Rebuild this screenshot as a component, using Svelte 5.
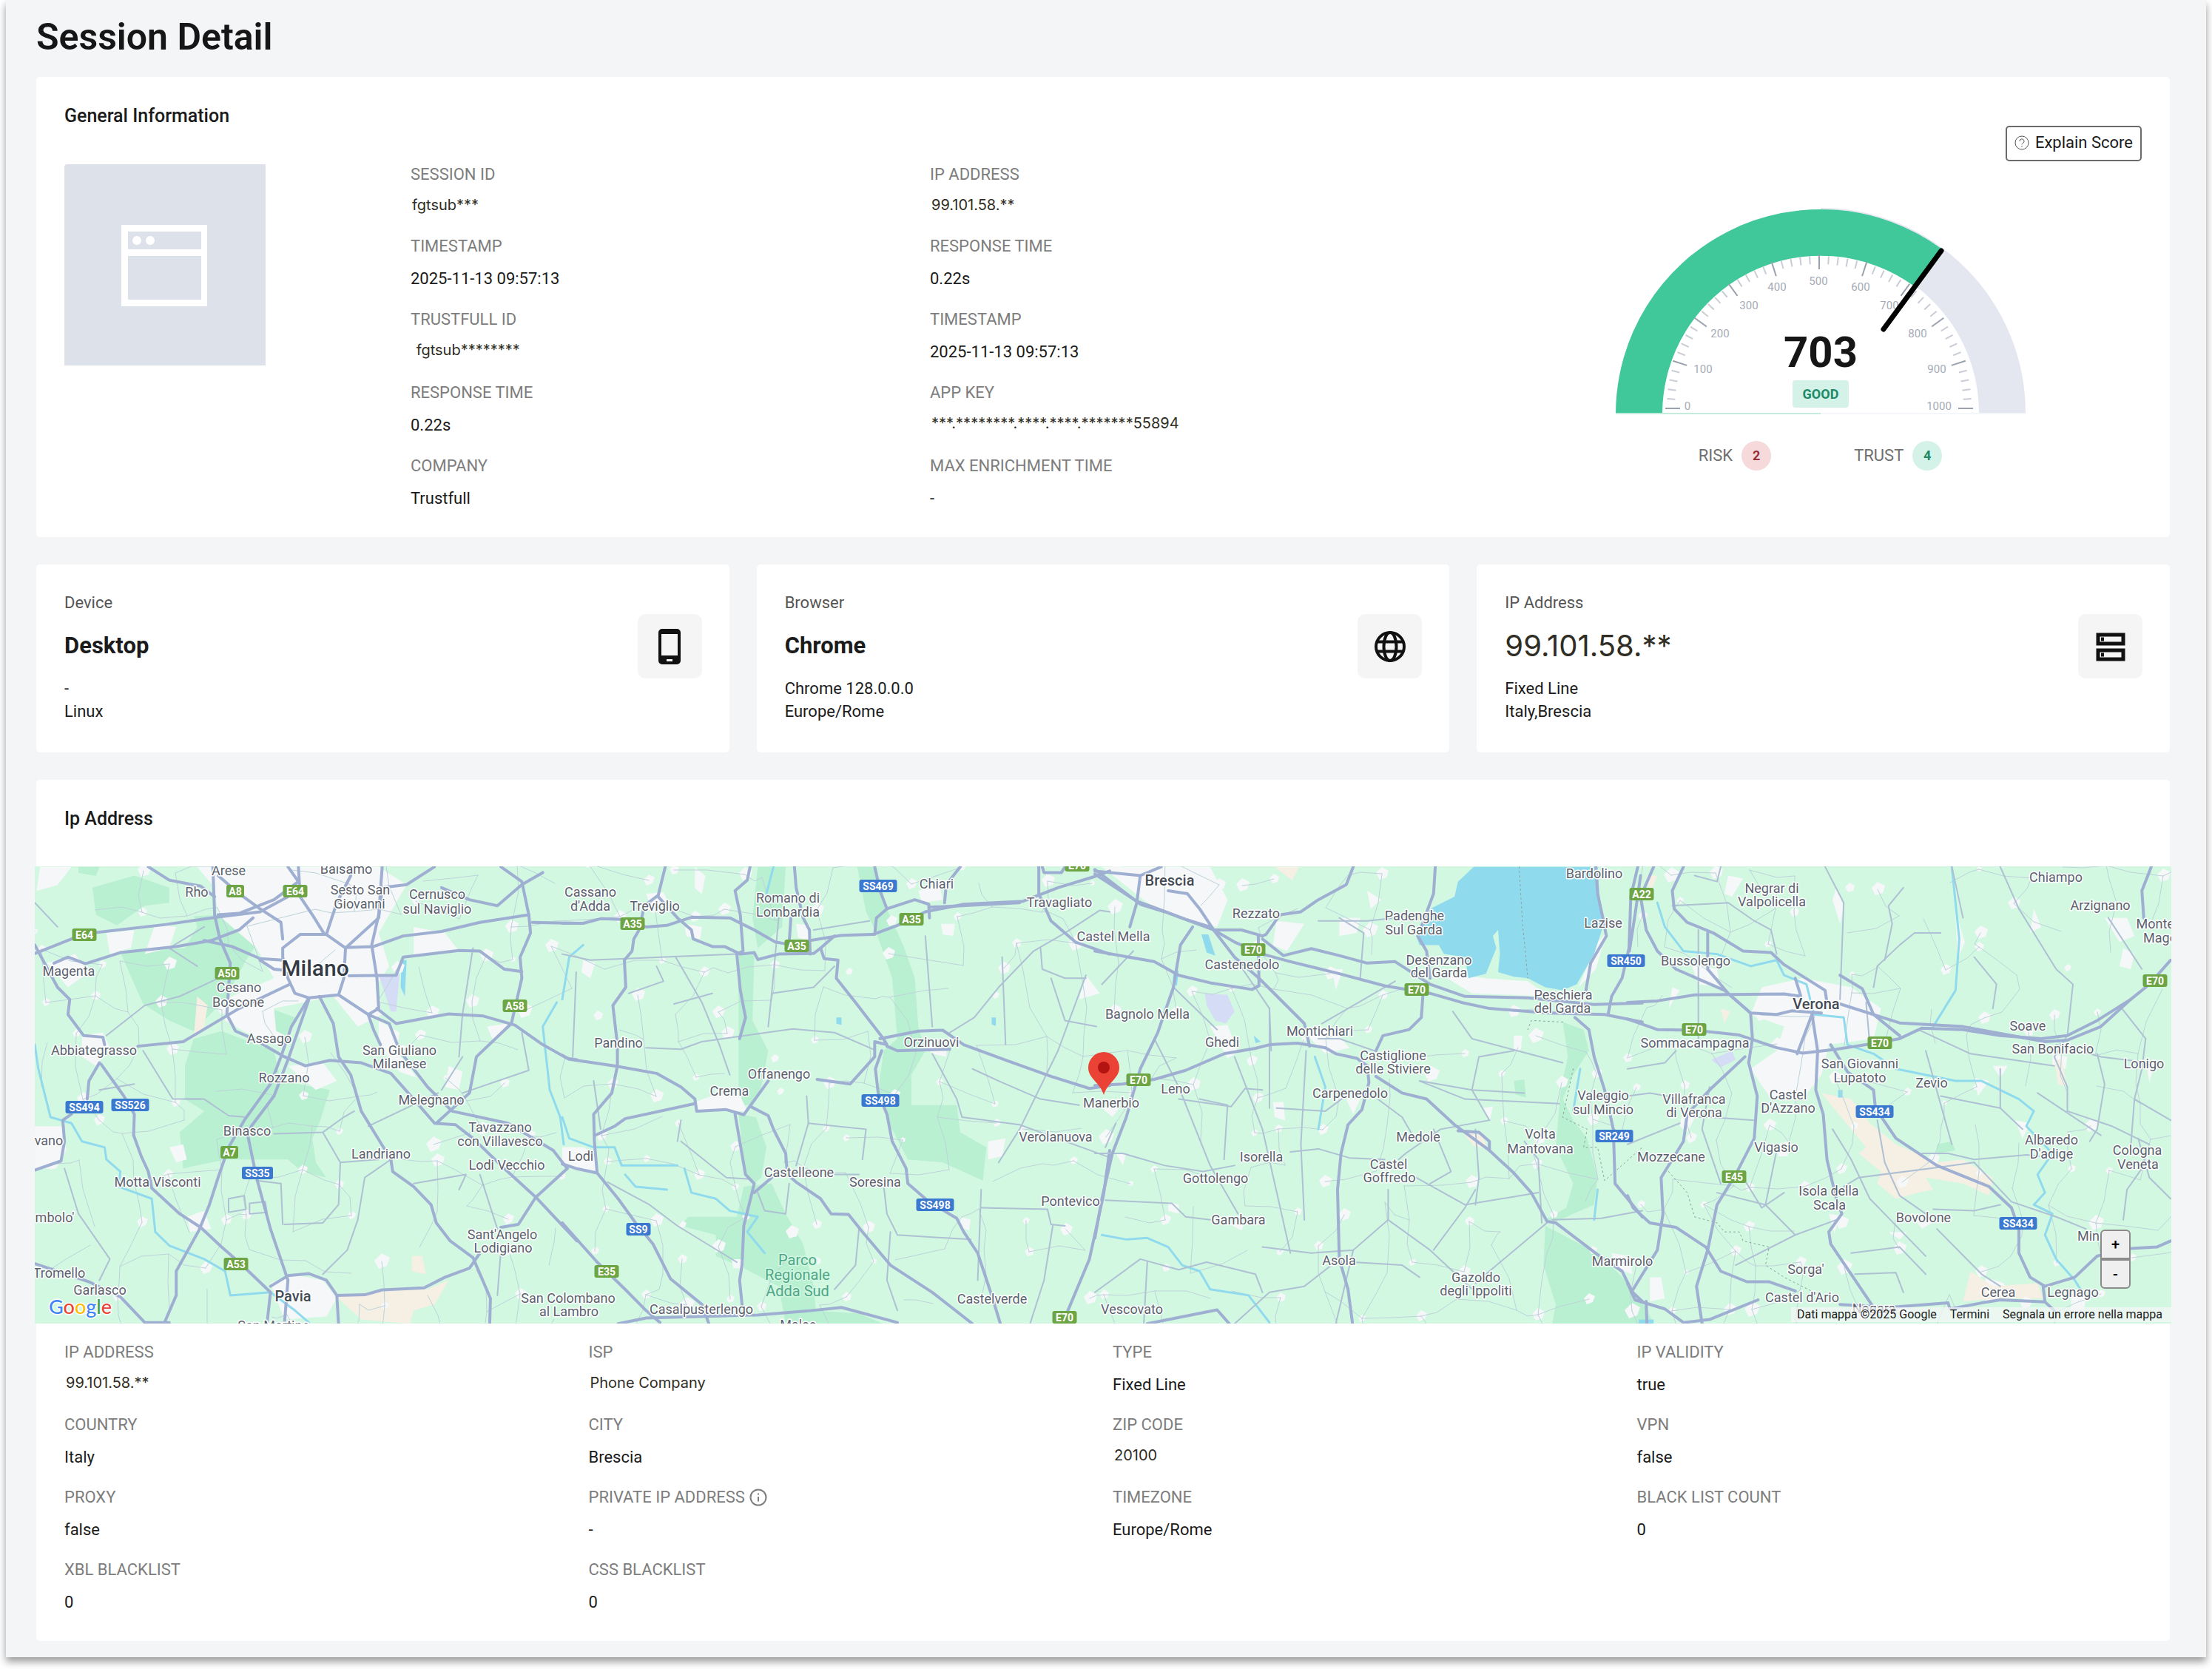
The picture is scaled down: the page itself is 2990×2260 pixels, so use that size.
<script>
  const session = [
    ['SESSION ID', 'fgtsub***', true],
    ['IP ADDRESS', '99.101.58.**', true],
    ['TIMESTAMP', '2025-11-13 09:57:13'],
    ['RESPONSE TIME', '0.22s'],
    ['TRUSTFULL ID', '\u00a0fgtsub********', true],
    ['TIMESTAMP', '2025-11-13 09:57:13'],
    ['RESPONSE TIME', '0.22s'],
    ['APP KEY', '***.********.****.****.*******55894', true],
    ['COMPANY', 'Trustfull'],
    ['MAX ENRICHMENT TIME', '-']
  ];

  const network = [
    ['IP ADDRESS', '99.101.58.**', true],
    ['ISP', 'Phone Company', true],
    ['TYPE', 'Fixed Line'],
    ['IP VALIDITY', 'true'],
    ['COUNTRY', 'Italy'],
    ['CITY', 'Brescia'],
    ['ZIP CODE', '20100', true],
    ['VPN', 'false'],
    ['PROXY', 'false'],
    ['PRIVATE IP ADDRESS', '-', false, true],
    ['TIMEZONE', 'Europe/Rome'],
    ['BLACK LIST COUNT', '0'],
    ['XBL BLACKLIST', '0'],
    ['CSS BLACKLIST', '0']
  ];

  const cards = [
    { label: 'Device', value: 'Desktop', lines: ['-', 'Linux'], icon: 'phone' },
    { label: 'Browser', value: 'Chrome', lines: ['Chrome 128.0.0.0', 'Europe/Rome'], icon: 'globe' },
    { label: 'IP Address', value: '99.101.58.**', lines: ['Fixed Line', 'Italy,Brescia'], icon: 'server', masked: true }
  ];

  // Gauge scale: 0 sits on the left, 1000 on the right, one tick each 20 points.
  const ticks = Array.from({ length: 51 }, (_, i) => {
    const a = Math.PI - (i / 50) * Math.PI;
    const major = i % 5 === 0;
    const outer = major ? 208 : 206;
    const inner = major ? 188 : 195;
    const c = Math.cos(a);
    const s = Math.sin(a);
    return { major, x1: 277 + outer * c, y1: 272 - outer * s, x2: 277 + inner * c, y2: 272 - inner * s };
  });
  const marks = [
    [0, 99, 274], [100, 120, 224], [200, 143, 176], [300, 182, 138], [400, 220, 113], [500, 276, 105],
    [600, 333, 113], [700, 372, 138], [800, 410, 176], [900, 436, 224], [1000, 439, 274]
  ];

  // The map is drawn as four neighbouring tiles, each with its own grid.
  const tiles = [
    {
      ox: 40, kx: 0.4719,
      urban: [
        'M480 31L1000 31 1080 90 1000 250 1030 360 990 430 1010 520 940 560 870 460 700 500 710 620 620 580 560 540 560 470 700 400 650 300 540 190 530 100Z',
        'M150 590l60 -10 20 50 -40 60 -40 -30Z', 'M15 890l80 0 10 80 -30 60 -60 0Z', 'M690 1410l60 -30 90 20 40 60 -30 60 -120 10Z',
        'M740 690l100 -10 40 60 -60 30Z', 'M50 350l80 -30 40 60 -60 50Z', 'M360 220l60 10 -20 70 -70 20Z', 'M220 250l80 -10 -10 60 -60 20Z',
        'M1000 540l60 40 -10 60 60 90 -50 -20 -60 -90Z', 'M1100 230l90 20 40 60 -130 20Z', 'M1200 690l40 20 -10 60 -40 -10Z', 'M30 31l90 0 -40 60 -60 20Z',
        'M450 1190l50 -20 20 60 -60 10Z', 'M400 960l40 -10 10 50 -30 10Z', 'M1310 560l60 -10 -40 60Z'
      ],
      park: [
        'M260 315L445 300 480 230 470 195 540 190 600 250 650 290 620 340 560 470 470 575 400 540 325 485Z',
        'M470 600L550 575 700 640 720 740 860 770 830 880 810 930 820 1010 850 1060 780 1040 740 1000 560 1000 440 1030 430 910 500 840 445 800 445 690Z',
        'M180 100L300 60 400 100 400 150 330 160 250 225 190 190Z', 'M690 500L760 530 720 620 690 590Z', 'M140 31l60 0 -10 30 -50 -10Z'
      ],
      beige: ['M880 1455L1000 1435 1140 1430 1200 1400 1160 1480 1100 1500 1090 1544 950 1530Z', 'M480 460l30 30 -10 70 -30 40Z', 'M1095 1320l30 0 10 60 -40 -10Z'],
      lilac: ['M1000 390L1060 385 1050 510 1035 510Z'],
      water: ['M1065 340l15 0 -5 120 -12 -30Z'],
      river: ['M15 620L25 700 60 860 120 880 150 940 215 960 220 1000 260 1040 255 1090 350 1130 360 1240 400 1285 500 1330 560 1370 575 1450 690 1440 760 1500 800 1540', 'M1510 480L1470 560 1490 770 1520 860 1530 950'],
      roads: [
        'M15 318L120 270 180 250 390 222 540 197 660 180 740 130', 'M340 31L400 75 490 95 530 130',
        'M525 31L530 190 545 270 575 350 565 520 590 575 640 600 730 660 790 690 860 672 950 680 1035 715 1100 800 1160 880 1220 885 1270 930 1360 1030 1450 1125 1568 1270',
        'M540 60L600 120 660 170 720 215 725 270', 'M770 31L775 130 810 190 845 255', 'M740 31L770 80 700 140 600 185 540 190',
        'M1010 31L1000 190 980 290 995 400 1000 500 970 520 985 570 1005 620',
        'M725 300L775 255 850 255 905 300 900 400 885 455 800 465 760 450 740 400 725 330Z',
        'M905 300L1000 200 1010 100 1080 90 1160 31', 'M905 298L985 295 1070 260 1180 245 1290 215 1430 190',
        'M915 392L1050 390 1070 330 1230 308 1290 310 1360 370 1410 378',
        'M1350 31L1410 80 1430 190 1435 250 1405 330 1410 400 1380 550 1280 660 1260 780 1165 880', 'M1440 215L1568 218',
        'M1470 50L1410 90 1340 160 1260 140 1180 100', 'M995 500L1050 550 1200 518 1300 525 1390 555 1470 620 1540 665 1568 670',
        'M885 455L970 520 1030 550 1060 640 1140 760 1210 840 1370 880 1500 970 1540 1030',
        'M800 465L750 560 720 660 690 750 615 870 570 960 540 1060 515 1150 485 1235 420 1370 420 1450 385 1544',
        'M800 470L740 670 700 790 635 890 625 920 650 1060 690 1230 740 1400 730 1544',
        'M830 460L870 550 885 660 920 720 950 840 1035 1000 1040 1040 1100 1090 1150 1150 1165 1210 1205 1270 1270 1325 1320 1460 1318 1544',
        'M745 420L600 500 440 610 310 625', 'M15 290L80 430 115 470 110 520 155 590 210 595 215 620',
        'M70 350L110 330 160 352 260 315 420 295 520 275 600 240 640 200', 'M500 275L580 295 660 335 725 340', 'M660 340L700 370 740 375',
        'M200 680L170 740 165 800', 'M205 685L270 790 300 850 298 920 320 990 340 1040 350 1095 430 1180 490 1225 550 1290 600 1340 690 1440 680 1544',
        'M15 1035L90 1005 100 940 95 870 120 850', 'M15 1345L80 1370 170 1405 260 1455 330 1540 400 1540',
        'M690 1420L740 1385 800 1378 850 1400 880 1450 885 1544', 'M880 1450L960 1448 1010 1432 1130 1425 1190 1390 1260 1360 1290 1310',
        'M1540 1030L1450 1125 1400 1215 1350 1225', 'M850 255L880 150 920 60'
      ],
      lanes: [
        'M540 400L430 460 330 490 220 590', 'M325 640L410 800 500 800 570 855 620 860', 'M445 800L490 800', 'M700 915L840 910 900 860 930 840',
        'M840 910L890 1010 885 1150 840 1210 730 1215', 'M650 1070L720 1080 725 1215', 'M1035 1000L960 1060 940 1200 910 1300 840 1380',
        'M1240 660L1180 770', 'M1240 780L1430 705 1410 580', 'M970 890L1170 780', 'M15 150L80 230', 'M200 770L300 750', 'M570 1130l45 -10 5 45 -50 10Z', 'M630 1145l45 -5 5 35 -50 5Z',
        'M1230 1100L1250 1050 1100 1080', 'M1290 1050L1340 1230', 'M100 1030L140 1180 230 1330 200 1400', 'M500 230L400 300 480 360', 'M1270 300L1240 520 1230 660', 'M1350 1300L1340 1450', 'M890 1010L1000 1000'
      ],
      labels: [
        ['Arese', 569, 58], ['Balsamo', 907, 54], ['Rho', 478, 131], ['Sesto San', 948, 123], ['Giovanni', 946, 170], ['Cernusco', 1168, 138],
        ['sul Naviglio', 1168, 185], ['Magenta', 112, 392], ['Milano', 817, 392, 'city'], ['Cesano', 600, 447], ['Boscone', 598, 494],
        ['Assago', 686, 615], ['Abbiategrasso', 185, 653], ['San Giuliano', 1060, 653], ['Milanese', 1060, 699], ['Rozzano', 728, 744],
        ['Melegnano', 1150, 819], ['Tavazzano', 1347, 908], ['con Villavesco', 1348, 955], ['vano', 56, 954], ['Binasco', 622, 921],
        ['Landriano', 1007, 997], ['Lodi Vecchio', 1367, 1034], ['Motta Visconti', 366, 1090], ["mbolo'", 72, 1207], ["Sant'Angelo", 1354, 1264],
        ['Lodigiano', 1357, 1309], ['Tromello', 85, 1391], ['Garlasco', 202, 1447], ['Pavia', 754, 1470, 'large'], ['San Martino', 700, 1566]
      ],
      shields: [
        ['E64', 157, 254, 'g'], ['A8', 590, 111, 'g'], ['E64', 761, 111, 'g'], ['A50', 566, 381, 'g'], ['A58', 1390, 491, 'g'],
        ['SS494', 157, 825, 'b'], ['SS526', 288, 818, 'b'], ['A7', 573, 974, 'g'], ['SS35', 653, 1044, 'b'], ['A53', 592, 1346, 'g']
      ]
    },
    {
      ox: 760, kx: 0.4719,
      urban: ['M240 120l50 -5 20 50 -50 20Z', 'M380 810l70 -30 60 10 20 50 -140 0Z', 'M0 960l60 0 40 20 -5 60 -95 -25Z', 'M350 220l50 10 -5 40 -40 -10Z', 'M670 220l40 5 -5 50 -30 -10Z', 'M1020 110l60 -20 10 50 -60 10Z', 'M1220 940l50 -10 -10 60 -40 10Z', 'M1040 620l60 5 0 35 -40 -10Z', 'M1085 220l40 0 -5 40 -30 -5Z', 'M1140 1190l30 10 -5 35 -25 -10Z', 'M485 1330l35 0 0 30 -30 0Z', 'M380 31l30 30 -10 60 -20 -20Z', 'M60 340l35 10 -15 50 -25 -20Z', 'M1500 390l40 60 -60 20Z'],
      park: [
        'M560 31L640 31 630 230 560 300 545 200Z', 'M505 320L550 320 545 540 590 640 570 760 540 820 505 820 505 600Z', 'M505 850L555 860 585 960 570 1060 550 1080 525 1050Z',
        'M520 1090L600 1080 640 1180 690 1280 720 1420 730 1544 640 1544 620 1420 520 1360 440 1320 440 1250 340 1220 360 1190 500 1190Z',
        'M845 31L900 31 930 170 980 300 1010 400 1020 560 1040 640 1000 720 1000 820 1130 820 1140 910 1215 960 1205 1070 1090 1010 990 1000 945 900 905 780 920 640 960 600 945 400 900 250 870 180Z', 'M720 1500l130 10 70 34 -190 0Z'
      ],
      beige: [],
      lilac: [],
      water: ['M785 530l15 0 0 25 -15 -5Z', 'M1230 530l12 0 0 28 -12 -5Z'],
      river: ['M0 860L20 930 90 960 150 960 170 1020 330 1020', 'M350 1030L370 1110 440 1130 480 1170 560 1190 530 1240 580 1310', 'M605 31L585 120', 'M60 290L20 330 0 470', 'M180 1050L210 1090 300 1100'],
      roads: [
        'M0 218L60 218 110 203 170 205 240 230 300 225 370 198 480 200 550 240 610 280 660 290 710 275 800 258 890 255 960 225 1040 180 1150 155 1320 145 1420 100 1520 65 1568 45',
        'M1050 165L1310 150', 'M295 31L275 125 235 160 220 240 205 270 200 310 178 340 182 430 145 490 158 620 158 690 142 780 90 850 92 940 100 1045',
        'M275 130L330 200 370 240 375 270 430 295 465 295 510 320 550 315 560 338 620 320 720 318 740 300 780 260',
        'M538 31L530 75 495 110 510 190 518 310 500 320 510 440 525 530 508 600', 'M665 31L670 100 690 200 708 240 710 320', 'M655 200L650 280',
        'M740 300L750 335 790 340 785 400 840 480 920 600 930 620 895 610 895 660 825 750 730 735',
        'M895 31L910 110 930 170 900 200 895 255', 'M930 170L1010 140 1050 155 1052 200', 'M1140 31L1100 90 1095 150',
        'M1365 31L1365 120 1400 210 1470 280 1568 320', 'M910 600L1020 575 1090 572 1150 620 1280 675 1400 725 1510 765 1568 755', 'M930 625L960 640 1110 635',
        'M915 640L897 700 905 780 930 850 945 940 985 1030 990 1080 1050 1140 1130 1195 1150 1240 1190 1310 1230 1450 1255 1544',
        'M0 655L20 668 150 690 270 715 340 760 380 800 385 840 470 835 520 852 540 820 590 740', 'M380 815L180 865 150 890 95 920',
        'M0 1015L40 1030 100 1045 160 1130 210 1210 260 1280 310 1395 400 1480 420 1544', 'M495 850L525 1050 550 1080 520 1220 515 1350 508 1400 515 1480',
        'M540 825L590 855 605 900 640 980 645 1050 670 1075 740 1130 770 1180 820 1182 860 1240 940 1350 1060 1440 1175 1544', 'M550 1110L600 1060',
        'M0 1210L100 1340 180 1430 240 1500 280 1540', 'M160 1544L240 1525 560 1515 700 1502 800 1490 960 1540', 'M1568 970L1550 1120 1510 1330 1445 1510',
        'M1375 31L1380 50 1430 50 1440 31'
      ],
      lanes: [
        'M0 320L80 340 500 320', 'M240 630L340 635 400 610 660 568 780 580 890 635', 'M325 330L400 480 450 620 480 720', 'M320 485L430 450', 'M190 450L290 410 270 360',
        'M1568 180L1540 175 1440 250 1350 310 1250 430 1180 530 1110 580', 'M1500 390L1420 640 1310 900 1250 1010', 'M1060 650L1130 800 1145 860 1310 885 1560 990', 'M1175 700L1250 740 1370 800 1480 820',
        'M700 790L705 880 670 1020', 'M705 880L870 900 860 1000', 'M340 940L470 1060 540 1065', 'M130 1075L250 1150 330 1220 500 1340', 'M850 1050L780 1050', 'M1200 1160L1390 1165 1400 1215 1440 1220',
        'M920 1080L930 1180 960 1250 1170 1265', 'M850 1230L840 1350 780 1430', 'M620 200L600 450 590 560', 'M720 240L880 210', 'M940 1240L930 1400 960 1500', 'M1370 300L1375 370 1440 400 1500 400', 'M1400 400L1440 540 1530 560', 'M1260 330L1270 620', 'M1040 260L1060 560', 'M650 1080L640 1180 580 1170 560 1110', 'M90 740L110 900', 'M1405 1220L1380 1400 1340 1544', 'M600 450L720 430 780 360', 'M30 660L40 380', 'M340 870L330 940', 'M1200 1100L1190 1400'
      ],
      labels: [
        ['Cassano', 80, 130], ["d'Adda", 80, 176], ['Treviglio', 264, 176], ['Romano di', 646, 149], ['Lombardia', 646, 195], ['Chiari', 1073, 104],
        ['Travagliato', 1423, 164], ['Pandino', 162, 630], ['Orzinuovi', 1058, 626], ['Offanengo', 621, 732], ['Crema', 479, 789], ['Lodi', 53, 1004],
        ['Castelleone', 678, 1059], ['Soresina', 896, 1091], ['Verolanuova', 1413, 940], ['Pontevico', 1455, 1154], ['San Colombano', 17, 1474],
        ['al Lambro', 19, 1518], ['Casalpusterlengo', 398, 1512], ['Parco', 673, 1350, 'nature'], ['Regionale', 673, 1400, 'nature'],
        ['Adda Sud', 673, 1452, 'nature'], ['Maleo', 675, 1562], ['Castelverde', 1231, 1478]
      ],
      shields: [
        ['SS469', 905, 92, 'b'], ['A35', 202, 217, 'g'], ['A35', 671, 291, 'g'], ['A35', 1001, 204, 'g'], ['SS498', 911, 804, 'b'],
        ['SS498', 1067, 1150, 'b'], ['SS9', 218, 1230, 'b'], ['E35', 127, 1370, 'g'], ['E70', 1438, 1521, 'g'], ['E70', 1475, 24, 'g']
      ]
    },
    {
      ox: 1480, kx: 0.4719,
      urban: ['M20 31L330 31 380 140 350 230 270 210 150 150Z', 'M520 210l80 10 -50 90 -40 -20Z', 'M700 200l60 0 -10 50 -50 10Z', 'M330 560l50 -5 30 90 -30 20Z', 'M600 580l80 -10 50 60 -70 20Z', 'M510 810l30 0 5 60 -30 -10Z', 'M980 380l140 20 120 10 60 50 -220 -10Z', 'M1440 280l25 -30 -30 120 -50 60Z', 'M720 800l40 0 -20 50Z', 'M20 830l50 0 -20 30Z', 'M1480 1310l50 10 10 60 -50 -20Z', 'M210 1140l30 10 0 30 -30 -10Z', 'M1200 590l25 0 -5 40 -20 5Z', 'M780 110l40 30 -30 30Z', 'M680 370l30 0 -20 70Z', 'M1110 830l30 -5 -10 50Z', 'M380 1210l50 -5 -10 30Z', 'M60 980l30 0 -10 40Z'],
      park: [
        'M1340 545L1400 570 1415 640 1370 720 1340 800 1370 870 1410 930 1440 1060 1430 1150 1310 1210 1290 1200 1350 1160 1370 1080 1320 960 1335 760 1355 660Z',
        'M1290 1220L1440 1310 1520 1400 1568 1470 1568 1544 1310 1544 1320 1480 1285 1350Z', 'M1200 740l30 -5 5 60 -30 -10Z'
      ],
      beige: ['M515 31l70 0 -20 45Z', 'M1050 905l60 15 15 45 -40 -10Z'],
      lilac: ['M315 450L380 455 400 510 375 550 345 540 320 490Z'],
      water: ['M1085 31L1440 31 1445 120 1455 230 1430 320 1380 420 1340 440 1290 430 1240 400 1200 395 1155 380 1160 320 1155 240 1140 260 1150 300 1120 385 1070 400 1060 330 1000 320 985 290 930 290 920 260 960 170 1030 130 1040 80Z', 'M455 590l20 20 -15 5Z', 'M305 255l20 0 20 70 -25 -10Z', 'M225 375l15 0 -5 50 -12 -10Z'],
      river: ['M20 1250L90 1265 150 1260 210 1290 250 1350 300 1370 330 1430 440 1450 500 1540', 'M630 660L660 760 640 900', 'M1390 700L1370 840', 'M1440 1100L1430 1200'],
      roads: [
        'M0 40L130 155 200 180 340 240 400 280 480 320 560 345 700 385 830 425 960 450 1050 480 1130 500 1300 515 1460 520 1568 545',
        'M0 55L120 145 180 170 260 205 330 230', 'M190 31L130 60 120 150 100 230', 'M0 45L130 60',
        'M210 110L265 120 300 170 340 240 420 240 480 260 490 255 530 190 590 180 640 140 720 90 740 31', 'M340 240L400 330 470 400 600 550 615 625',
        'M280 230L245 290 225 430 180 580 130 700 90 860 50 980 20 1130 0 1260', 'M0 310L170 345 240 390 330 415 450 437 470 425 468 260',
        'M0 755L80 750 170 735 260 705 370 650 460 632 500 620 580 615 660 630 690 650 750 665 780 690 785 745 765 835 725 885 705 980 695 1100 700 1330 725 1430 738 1544',
        'M805 640L825 590 900 570 935 530 940 450', 'M975 31L970 120 925 260 950 310 960 400',
        'M480 270L540 325 620 302 700 325 780 350 860 345 960 420 1060 460 1240 465 1430 487 1568 482',
        'M805 725L880 780 950 800 1030 885 1130 970 1200 1045 1250 1110 1295 1205 1320 1210 1440 1315 1510 1370 1540 1440 1568 1470',
        'M1040 905L1100 910 1130 940 1130 970', 'M1435 31L1440 120 1455 200 1465 260 1420 350 1405 450', 'M1555 31L1535 130 1530 300 1510 400 1480 460 1470 520',
        'M1375 530L1415 570 1430 660 1460 770 1485 900 1490 1080 1540 1150 1568 1190', 'M150 1544L350 1498 385 1544'
      ],
      lanes: [
        'M225 430L350 570', 'M400 330L500 500 505 640', 'M860 410L650 550', 'M170 600L240 760 330 1020 410 1180', 'M240 800L390 825 430 765 480 770', 'M400 660L480 900 560 1310', 'M520 830L660 840 730 780',
        'M0 980L80 980 200 1020 310 1040 400 1020', 'M30 1135L220 1145 260 1190 330 1200', 'M560 975L640 965 730 995 830 1000', 'M605 640L590 950 600 1200', 'M480 1290L620 1310 740 1300 840 1200 960 1300 1090 1440',
        'M920 1060L1060 1150 1270 1110', 'M840 1100L840 1200', 'M740 1340L880 1350 930 1390', 'M930 740L1060 800 1330 815', 'M930 740L1080 770 1230 780', 'M1130 870L990 900 890 980 870 1000', 'M1300 1205L1130 1370 1090 1410',
        'M1310 1200L1450 1195 1568 1170', 'M700 1330L600 1420 500 1440 400 1544', 'M0 1440L130 1330 240 1365 320 1340 460 1380 480 1440', 'M20 420L110 310', 'M640 210L780 210 860 200', 'M700 200L770 250 760 400', 'M1200 640L1100 660 1080 770 1130 870', 'M1025 510L1080 600 1210 640 1340 680', 'M300 800L380 820 370 1000', 'M500 500L500 830', 'M970 900L1020 1040 960 1080', 'M1090 1100L1060 1160 970 1300', 'M1280 1210L1270 1000 1230 940', 'M740 1300L690 1544', 'M1090 900L1100 1060 1090 1150', 'M810 800L880 860 910 920', 'M60 880L30 960', 'M150 1340L140 1544', 'M800 640L700 600 640 600'
      ],
      dotted: ['M1215 31L1225 220 1240 400', 'M1340 545L1250 540 1240 570', 'M1370 700L1340 860 1410 900 1400 960 1440 960 1460 1070 1568 960'],
      labels: [
        ['Brescia', 213, 92, 'large'], ['Rezzato', 461, 202], ['Castel Mella', 53, 276], ['Castenedolo', 421, 369], ['Bagnolo Mella', 151, 535],
        ['Ghedi', 364, 626], ['Montichiari', 645, 591], ['Padenghe', 915, 209], ['Sul Garda', 914, 255], ['Desenzano', 985, 354], ['del Garda', 985, 398],
        ['Peschiera', 1341, 471], ['del Garda', 1339, 515], ['Bardolino', 1431, 69], ['Lazise', 1456, 232], ['Castiglione', 855, 671],
        ['delle Stiviere', 855, 716], ['Carpenedolo', 731, 796], ['Leno', 231, 782], ['Manerbio', 47, 827], ['Medole', 926, 940], ['Volta', 1276, 932],
        ['Mantovana', 1276, 979], ['Valeggio', 1455, 804], ['sul Mincio', 1455, 850], ['Isorella', 476, 1008], ['Castel', 842, 1031], ['Goffredo', 844, 1076],
        ['Gottolengo', 346, 1079], ['Gambara', 411, 1215], ['Asola', 700, 1351], ['Gazoldo', 1092, 1406], ['degli Ippoliti', 1092, 1451],
        ['Vescovato', 107, 1512], ['Marmirolo', 1511, 1353]
      ],
      shields: [['E70', 453, 304, 'g'], ['E70', 921, 436, 'g'], ['E70', 126, 734, 'g'], ['SR450', 1522, 341, 'b'], ['SR249', 1487, 920, 'b']]
    },
    {
      ox: 2200, kx: 0.5038,
      urban: ['M360 430L470 400 600 430 680 500 660 600 540 620 520 720 470 800 380 790 330 700 400 640 420 560 330 520Z', 'M170 350l70 20 10 60 -60 -10Z', 'M1280 200l60 0 20 60 -40 20Z', 'M1140 650l40 10 -5 40 -35 -10Z', 'M960 1390l50 20 10 60 -60 0Z', 'M1190 1440l40 20 -10 60 -30 -20Z', 'M60 1390l30 0 10 70 -40 10Z', 'M150 830l40 10 -30 70 -20 -20Z', 'M930 730l40 10 -30 50Z', 'M1040 870l40 10 -20 50Z', 'M760 1180l70 20 -40 30Z', 'M700 1240l50 0 -20 25Z', 'M980 690l40 0 -20 40Z', 'M560 100l20 60 -10 60 -20 -80Z', 'M880 180l25 100 -20 60Z', 'M1090 170l20 60 -30 20Z', 'M1330 300l30 20 -10 50 -30 -10Z', 'M400 950l30 -10 0 50 -25 0Z', 'M1390 670l25 5 -15 70Z', 'M540 1180l30 5 -15 60Z', 'M270 60l40 10 -30 60 -20 -10Z', 'M120 430l20 10 -30 60Z'],
      park: ['M830 950l40 -10 10 30 -50 10Z', 'M0 1450l40 20 30 74 -70 0Z'],
      beige: ['M520 780L600 800 650 880 720 950 830 1010 900 1000 980 1060 970 1120 900 1080 800 1060 820 1100 780 1110 720 1130 670 1080 680 1040 620 980 640 960 600 900Z', 'M920 1370L980 1420 1100 1410 1115 1460 1000 1460 900 1470Z', 'M1145 670l20 0 15 90 -25 -10Z', 'M50 60l30 0 -20 60Z', 'M250 500l25 10 -15 40Z'],
      lilac: ['M225 670L280 640 290 670 250 695Z'],
      water: ['M30 1530l40 0 0 14 -40 0Z', 'M565 770l12 0 0 25 -12 0Z'],
      river: ['M80 150L100 230 150 310 240 320 330 360 400 340 420 390 480 420 500 520 580 530 590 620 660 650 720 700 880 740 950 740 1050 800 1090 840 1070 890 1140 980 1100 1050 1120 1110 1090 1150 1140 1180 1120 1250 1150 1330 1200 1400 1230 1460', 'M870 31L890 270 880 440 820 560'],
      roads: [
        'M0 535L80 570 180 572 300 588 400 630 470 648 560 635 640 620 730 600 790 565 900 570 1000 590 1110 600 1180 590 1260 540 1350 470 1400 420 1457 340',
        'M1350 470L1270 560 1180 605 1120 610 900 560 730 548 570 485', 'M0 480L80 475 180 455 420 452 465 460 450 400',
        'M150 31L120 110 125 170 160 215 230 250 310 310 385 315 420 355 530 440 535 480', 'M70 31L35 130 50 240 80 310 130 370 260 440 330 515 335 600',
        'M5 310L20 190 35 60', 'M215 250L215 370 270 450 330 515 400 520 440 508 520 515',
        'M335 600L325 680 348 790 340 930 290 1050 240 1150 215 1300 185 1420 200 1544', 'M315 660L220 770 160 850 150 940 90 1060 95 1180 80 1300 10 1440',
        'M495 520L510 640 505 770 525 850 535 1000 560 1130 575 1180 540 1240 545 1280 600 1380 660 1490', 'M495 520L455 650',
        'M545 620L590 710 660 770 665 830 720 930 830 1020 970 1090 1030 1160 1050 1230 1050 1310 1080 1390 1120 1420 1200 1390 1260 1320 1350 1295 1420 1290 1457 1270',
        'M570 390L630 435 660 520 730 590', 'M0 1120L15 1160 60 1210 130 1225 210 1290 250 1370 320 1405 380 1405 450 1435',
        'M0 1410L20 1465 100 1495 150 1540 220 1530 350 1465', 'M570 1480L700 1490 860 1475 865 1495 950 1475 1000 1465 1120 1472 1115 1420', 'M1120 1472L1145 1500',
        'M1405 31L1380 110 1385 200', 'M50 1470L52 1544'
      ],
      lanes: [
        'M900 200L870 31', 'M1050 170L1000 31', 'M1050 170L1150 370 1195 420 1180 590 1145 660 1180 760 1180 840 1300 890 1400 950', 'M780 570L920 650 1145 690', 'M1150 620L1270 660 1400 680', 'M1290 200L1380 370',
        'M670 870L690 1010 730 1120 800 1180', 'M580 1090L620 1060 840 1025 930 1010', 'M550 900L600 1000 650 1130 800 1320', 'M790 980L860 980 930 1000 1070 985 1110 990', 'M930 1010L1030 1140 1150 1190 1230 1230', 'M830 1230L950 1380 1000 1420',
        'M800 640L870 950', 'M840 790L1000 830 1060 900', 'M660 430L670 360 730 290 770 250 840 250', 'M400 970L370 1150 240 1110', 'M370 1150L450 1250 560 1200', 'M310 1060L360 1160 420 1110', 'M170 860L220 860 340 870', 'M220 760L200 900 250 1080', 'M0 950L140 880',
        'M1260 650L1280 750 1260 900 1240 940', 'M1390 600L1380 700 1360 800 1350 960', 'M1370 930L1400 1060 1457 1130', 'M1330 1200L1340 1100 1380 1030', 'M820 1165L930 1170 1000 1150', 'M450 1250L290 1350', 'M600 1310L730 1290 800 1380', 'M610 1380L720 1375 740 1440', 'M1100 780L1270 920', 'M530 31L580 150 570 470', 'M250 31L240 80 180 60', 'M120 160L270 150 340 210 385 240 400 320', 'M690 340L710 220 700 160 740 100', 'M930 330L990 420 980 500', 'M0 790L60 780 150 800', 'M0 700L100 680 130 640', 'M190 600L190 240', 'M640 480L650 620', 'M1457 870L1360 800', 'M1000 700L1000 830', 'M1320 490L1390 600'
      ],
      dotted: ['M110 1040L160 1110 180 1190 240 1210 260 1240 300 1240 310 1270 380 1290 370 1350 420 1390 500 1440'],
      labels: [
        ['Negrar di', 388, 117], ['Valpolicella', 388, 162], ['Chiampo', 1150, 82], ['Arzignano', 1269, 173], ['Montec', 1425, 235], ['Mago', 1430, 281],
        ['Bussolengo', 183, 358], ['Verona', 506, 501, 'large'], ['Soave', 1074, 573], ['Sommacampagna', 180, 629], ['San Bonifacio', 1142, 648],
        ['San Giovanni', 624, 698], ['Lupatoto', 624, 744], ['Lonigo', 1386, 699], ['Zevio', 816, 762], ['Castel', 430, 800], ["D'Azzano", 430, 846],
        ['Villafranca', 179, 815], ['di Verona', 178, 860], ['Albaredo', 1138, 951], ["D'adige", 1138, 996], ['Cologna', 1367, 985], ['Veneta', 1369, 1031],
        ['Vigasio', 398, 974], ['Mozzecane', 117, 1007], ['Isola della', 540, 1120], ['Scala', 541, 1165], ['Bovolone', 793, 1207], ["Sorga'", 479, 1380],
        ["Castel d'Ario", 468, 1472], ['Cerea', 995, 1454], ['Legnago', 1195, 1454], ['Min', 1237, 1270], ['Nogara', 660, 1508]
      ],
      shields: [
        ['A22', 38, 119, 'g'], ['E70', 179, 568, 'g'], ['E70', 676, 612, 'g'], ['E70', 1416, 406, 'g'], ['SS434', 663, 841, 'b'], ['E45', 286, 1055, 'g'], ['SS434', 1048, 1210, 'b']
      ]
    }
  ];

  const layers = ['park', 'urban', 'beige', 'lilac', 'water', 'river', 'lanes', 'dotted', 'roads'];
  const px = (t, x) => Math.round(t.ox + x * t.kx);
  const py = (y) => Math.round(1160 + y * 0.4082);

  const places = tiles.flatMap((t) => t.labels.map(([text, x, y, kind = 'town']) => ({ text, kind, x: px(t, x), y: py(y) })));
  const shields = tiles.flatMap((t) =>
    t.shields.map(([text, x, y, tone]) => ({ text, tone, x: px(t, x), y: py(y), w: text.length * 9 + 6 }))
  );

  // Country lanes and hamlets: a jittered net, the same at each load.
  let seed = 11;
  const rand = () => (seed = (seed * 16807) % 2147483647) / 2147483647;
  const step = 58;
  const cols = 51;
  const rows = 12;
  const nodes = [];
  for (let r = 0; r < rows; r++) {
    for (let c = 0; c < cols; c++) {
      nodes.push([Math.round(40 + c * step + rand() * 44), Math.round(1160 + r * step + rand() * 44)]);
    }
  }
  let net = '';
  let hamlets = '';
  nodes.forEach(([x, y], i) => {
    const inLake = x > 1900 && x < 2190 && y < 1360;
    const join = (n) => {
      if (!n) return;
      const mx = Math.round((x + n[0]) / 2 + rand() * 14 - 7);
      const my = Math.round((y + n[1]) / 2 + rand() * 14 - 7);
      net += `M${x} ${y}L${mx} ${my} ${n[0]} ${n[1]}`;
    };
    if (inLake) return;
    if (i % cols < cols - 1 && rand() < 0.42) join(nodes[i + 1]);
    if (rand() < 0.5) join(nodes[i + cols]);
    if (rand() < 0.5) {
      const s = 4 + Math.round(rand() * 7);
      hamlets += `M${x} ${y - s}l${s} ${Math.round(s / 2)} -${Math.round(s / 3)} ${s} -${s} ${Math.round(s / 3)} -${Math.round(s / 2)} -${s}Z`;
    }
  });
</script>

{#snippet field([label, value, masked, info])}
  <div class="field">
    <dt>
      {label}
      {#if info}
        <svg class="info" viewBox="0 0 24 24" aria-hidden="true">
          <circle cx="12" cy="12" r="10.5" /><path d="M12 11v6.5M12 6.5v2" />
        </svg>
      {/if}
    </dt>
    <dd class:masked>{value}</dd>
  </div>
{/snippet}

<main class="page">
  <h1>Session Detail</h1>

  <section class="card general">
    <h2>General Information</h2>
    <svg class="preview" viewBox="0 0 272 272" role="img" aria-label="Browser window">
      <rect width="272" height="272" fill="#dde1e9" />
      <path fill="#fff" fill-rule="evenodd" d="M77 82h116v110H77ZM86 91v24h99V91ZM86 124v59h99v-59Z" />
      <circle cx="98" cy="103" r="6" fill="#fff" /><circle cx="116" cy="103" r="6" fill="#fff" />
    </svg>
    <dl class="session">
      {#each session as item}{@render field(item)}{/each}
    </dl>
    <div class="score">
      <button class="explain" type="button">
        <svg viewBox="0 0 20 20" aria-hidden="true">
          <circle cx="10" cy="10" r="9" /><path d="M7 8a3 3 0 1 1 4.6 2.4c-1 .6-1.6 1-1.6 2M10 14v1.6" />
        </svg>
        Explain Score
      </button>
      <div class="dial">
        <svg class="gauge" viewBox="0 0 558 282" role="img" aria-label="Score 703 of 1000, good">
          <path fill="#e5e7f0" d="M279 1A277 277 0 0 1 556 278H493A214 214 0 0 0 279 64Z" />
          <path fill="#40c79a" d="M2 278A277 277 0 0 1 442 56L404 106A214 214 0 0 0 65 278Z" />
          <path fill="#c3ecdd" d="M2 278h277v2H2z" />
          <path fill="#f5f6fa" d="M279 278h277v2H279z" />
          {#each ticks as t}
            <line class:major={t.major} x1={t.x1} y1={t.y1} x2={t.x2} y2={t.y2} />
          {/each}
          {#each marks as [n, x, y]}
            <text class="mark" {x} {y}>{n}</text>
          {/each}
          <path class="needle" d="M442 59L364 165" />
          <text class="total" x="279" y="216">703</text>
          <rect x="241" y="234" width="76" height="37" rx="4" fill="#d5f2e8" />
          <text class="grade" x="279" y="259">GOOD</text>
        </svg>
        <div class="counts">
          <span class="count">RISK <b class="risk">2</b></span>
          <span class="count">TRUST <b class="trust">4</b></span>
        </div>
      </div>
    </div>
  </section>

  <div class="tiles">
    {#each cards as c}
      <section class="card tile">
        <div>
          <p class="caption">{c.label}</p>
          <p class="headline" class:masked={c.masked}>{c.value}</p>
          {#each c.lines as line}<p class="line">{line}</p>{/each}
        </div>
        <span class="badge">
          {#if c.icon === 'phone'}
            <svg viewBox="0 0 48 48" aria-hidden="true">
              <path fill="#111" fill-rule="evenodd" d="M14 0h20a5 5 0 0 1 5 5v38a5 5 0 0 1-5 5H14a5 5 0 0 1-5-5V5a5 5 0 0 1 5-5ZM13 7v29h22V7ZM20 41v3h8v-3Z" />
            </svg>
          {:else if c.icon === 'globe'}
            <svg viewBox="0 0 48 48" aria-hidden="true" fill="none" stroke="#111" stroke-width="4">
              <circle cx="24" cy="24" r="19" /><ellipse cx="24" cy="24" rx="8.5" ry="19" /><path d="M6 17.5h36M6 30.5h36" />
            </svg>
          {:else}
            <svg viewBox="0 0 48 48" aria-hidden="true" fill="none" stroke="#111" stroke-width="5">
              <path d="M7 8h34v12H7ZM7 29h34v12H7Z" /><path d="M11 14h4M11 35h4" />
            </svg>
          {/if}
        </span>
      </section>
    {/each}
  </div>

  <section class="card location">
    <h2>Ip Address</h2>
    <div class="map">
      <svg viewBox="47 1172 2888 618" role="img" aria-label="Map of Lombardy centred on Manerbio">
        <rect x="46" y="1172" width="2890" height="618" fill="#d3f8e2" />
        {#each tiles as t}
          <g transform="translate({t.ox} 1160) scale({t.kx} 0.4082)">
            {#each layers.slice(0, 5) as name}
              {#each t[name] ?? [] as d}<path class={name} {d} />{/each}
            {/each}
          </g>
        {/each}
        <path d={hamlets} fill="#f5f7f8" />
        <path d={net} class="net" />
        {#each tiles as t}
          <g transform="translate({t.ox} 1160) scale({t.kx} 0.4082)">
            {#each layers.slice(5) as name}
              {#each t[name] ?? [] as d}<path class={name} {d} />{/each}
            {/each}
          </g>
        {/each}
        {#each shields as s}
          <rect x={s.x - s.w / 2} y={s.y - 8} width={s.w} height="17" rx="3" fill={s.tone === 'g' ? '#6ea544' : '#3b78cf'} />
          <text class="shield" x={s.x} y={s.y + 6}>{s.text}</text>
        {/each}
        {#each places as p}
          <text class="place {p.kind}" x={p.x} y={p.y}>{p.text}</text>
        {/each}
        <path fill="#ea4335" d="M1492 1423a21 21 0 0 1 21 21c0 15-16 20-21 37c-5-17-21-22-21-37a21 21 0 0 1 21-21Z" />
        <circle cx="1492" cy="1444" r="8" fill="#b31412" />
        <text class="logo" x="66" y="1777"><tspan fill="#4285f4">G</tspan><tspan fill="#ea4335">o</tspan><tspan fill="#fbbc05">o</tspan><tspan fill="#4285f4">g</tspan><tspan fill="#34a853">l</tspan><tspan fill="#ea4335">e</tspan></text>
      </svg>
      <div class="zoom">
        <button type="button" aria-label="Zoom in">+</button>
        <button type="button" aria-label="Zoom out">-</button>
      </div>
      <div class="legal">
        <span>Dati mappa ©2025 Google</span>
        <a href="#terms">Termini</a>
        <a href="#report">Segnala un errore nella mappa</a>
      </div>
    </div>
    <dl class="network">
      {#each network as item}{@render field(item)}{/each}
    </dl>
  </section>
</main>

<style>
  :global(body) {
    margin: 0;
    background: #fff;
  }
  .page {
    margin: 0 8px 16px;
    padding: 20px 49px 22px 41px;
    background: #f3f5f7;
    box-shadow: 0 6px 10px rgba(0, 0, 0, 0.4);
    color: #1b1b1b;
    font: 400 22px/26px Roboto, 'Liberation Sans', sans-serif;
  }
  h1, h2, p, dl, dd {
    margin: 0;
  }
  h1 {
    margin-bottom: 24px;
    font-size: 50px;
    line-height: 60px;
    font-weight: 600;
    color: #161616;
  }
  h2 {
    font-size: 25px;
    line-height: 28px;
    font-weight: 500;
  }
  .card {
    background: #fff;
    border-radius: 5px;
  }
  .general {
    display: grid;
    grid-template-columns: 2fr 3fr 3fr 4fr;
    grid-template-rows: auto 1fr;
    row-gap: 51px;
    padding: 39px 38px;
  }
  .general h2 {
    grid-column: 1 / 4;
  }
  .preview {
    width: 272px;
    border-radius: 4px 0 0 0;
  }
  .session {
    grid-column: 2 / 4;
    display: grid;
    grid-template-columns: 1fr 1fr;
    row-gap: 29px;
    align-content: start;
    padding-top: 1px;
  }
  dt {
    display: flex;
    align-items: center;
    gap: 6px;
    color: #7d7d7d;
    margin-bottom: 18px;
  }
  .info {
    width: 24px;
    fill: none;
    stroke: #7d7d7d;
    stroke-width: 2;
  }
  .masked {
    font-family: Inter, 'Liberation Sans', sans-serif;
    color: #2f2d24;
  }
  dd.masked {
    padding-left: 2px;
    margin-top: -2px;
    margin-bottom: 2px;
    font-size: 20px;
    line-height: 24px;
  }
  .score {
    grid-column: 4;
    grid-row: 1 / 3;
    display: flex;
    flex-direction: column;
    padding-top: 27px;
  }
  .explain {
    display: flex;
    align-items: center;
    align-self: flex-end;
    gap: 8px;
    height: 48px;
    padding: 0 10px 2px;
    border: 2px solid #6b6b6b;
    border-radius: 5px;
    background: #fff;
    color: #1b1b1b;
    font: inherit;
  }
  .explain svg {
    width: 20px;
    fill: none;
    stroke: #555;
    stroke-width: 1;
  }
  .dial {
    display: flex;
    flex-direction: column;
    align-items: center;
    padding: 62px 0 0 67px;
  }
  .gauge {
    width: 558px;
    max-width: 100%;
  }
  .gauge line {
    stroke: #c9cdd5;
    stroke-width: 2;
  }
  .gauge line.major {
    stroke: #9aa1ae;
  }
  .gauge text {
    text-anchor: middle;
  }
  .mark {
    font-size: 15px;
    fill: #a5abb6;
  }
  .needle {
    stroke: #000;
    stroke-width: 7;
    stroke-linecap: round;
  }
  .total {
    font-size: 58px;
    font-weight: 700;
    fill: #161616;
  }
  .grade {
    font-size: 18px;
    font-weight: 700;
    fill: #1d8a68;
  }
  .counts {
    display: flex;
    gap: 112px;
    margin-top: 34px;
  }
  .count {
    display: flex;
    align-items: center;
    gap: 12px;
    color: #6f6f6f;
  }
  .count b {
    width: 40px;
    border-radius: 50%;
    font-size: 18px;
    line-height: 40px;
    text-align: center;
  }
  .risk {
    background: #f6dadb;
    color: #96313a;
  }
  .trust {
    background: #d5f2e8;
    color: #1d8a68;
  }
  .tiles {
    display: grid;
    grid-template-columns: repeat(3, 1fr);
    gap: 37px;
    margin: 37px 0;
  }
  .tile {
    display: flex;
    justify-content: space-between;
    padding: 39px 37px 40px 38px;
  }
  .caption {
    color: #555;
  }
  .headline {
    margin: 27px 0 24px;
    font-size: 31px;
    line-height: 36px;
    font-weight: 700;
  }
  .headline.masked {
    font-size: 40px;
    font-weight: 400;
  }
  .line {
    line-height: 31px;
  }
  .badge {
    display: grid;
    place-items: center;
    width: 87px;
    height: 87px;
    margin-top: 28px;
    border-radius: 10px;
    background: #f5f5f5;
  }
  .badge svg {
    width: 48px;
  }
  .location h2 {
    padding: 39px 38px 50px;
  }
  .map {
    position: relative;
    margin: 0 -2px;
  }
  .map svg {
    display: block;
    width: 100%;
  }
  .map path {
    stroke-linejoin: round;
    stroke-linecap: round;
    vector-effect: non-scaling-stroke;
  }
  .park {
    fill: #b9f0d1;
  }
  .urban {
    fill: #f5f7f8;
  }
  .beige {
    fill: #f5efe4;
  }
  .lilac {
    fill: #d5dcf5;
  }
  .water {
    fill: #90daee;
  }
  .river {
    fill: none;
    stroke: #90daee;
    stroke-width: 3;
  }
  .net {
    fill: none;
    stroke: #bdd3d9;
    stroke-width: 1;
  }
  .lanes {
    fill: none;
    stroke: #aec0d3;
    stroke-width: 2;
  }
  .dotted {
    fill: none;
    stroke: #8aa39c;
    stroke-width: 1;
    stroke-dasharray: 2 4;
  }
  .roads {
    fill: none;
    stroke: #9fafd2;
    stroke-width: 4;
  }
  .shield {
    font-size: 14px;
    font-weight: 700;
    fill: #fff;
    text-anchor: middle;
  }
  .place {
    text-anchor: middle;
    font-size: 18px;
    fill: #5a626d;
    stroke: #fff;
    stroke-width: 3;
    stroke-linejoin: round;
    paint-order: stroke;
  }
  .large {
    font-size: 20px;
    font-weight: 500;
    fill: #434a54;
  }
  .city {
    font-size: 30px;
    font-weight: 500;
    fill: #333a44;
  }
  .nature {
    font-size: 20px;
    fill: #4fa587;
    stroke: #d3f8e2;
  }
  .logo {
    font: 500 27px Lato, sans-serif;
    stroke: #fff;
    stroke-width: 3;
    paint-order: stroke;
  }
  .zoom {
    position: absolute;
    right: 55px;
    bottom: 47px;
    display: flex;
    flex-direction: column;
  }
  .zoom button {
    width: 41px;
    height: 40px;
    padding: 0;
    border: 2px solid #8b8b8b;
    border-radius: 6px 6px 0 0;
    background: #efefef;
    color: #000;
    font: 500 20px Roboto, sans-serif;
  }
  .zoom button:last-child {
    border-radius: 0 0 6px 6px;
  }
  .legal {
    position: absolute;
    right: 0;
    bottom: 2px;
    display: flex;
    gap: 18px;
    padding: 0 12px 0 8px;
    background: rgba(245, 247, 247, 0.7);
    font-size: 16px;
    line-height: 20px;
  }
  .legal a {
    color: inherit;
    text-decoration: none;
  }
  .network {
    display: grid;
    grid-template-columns: repeat(4, 1fr);
    gap: 28px 26px;
    padding: 26px 38px 39px;
  }
</style>
